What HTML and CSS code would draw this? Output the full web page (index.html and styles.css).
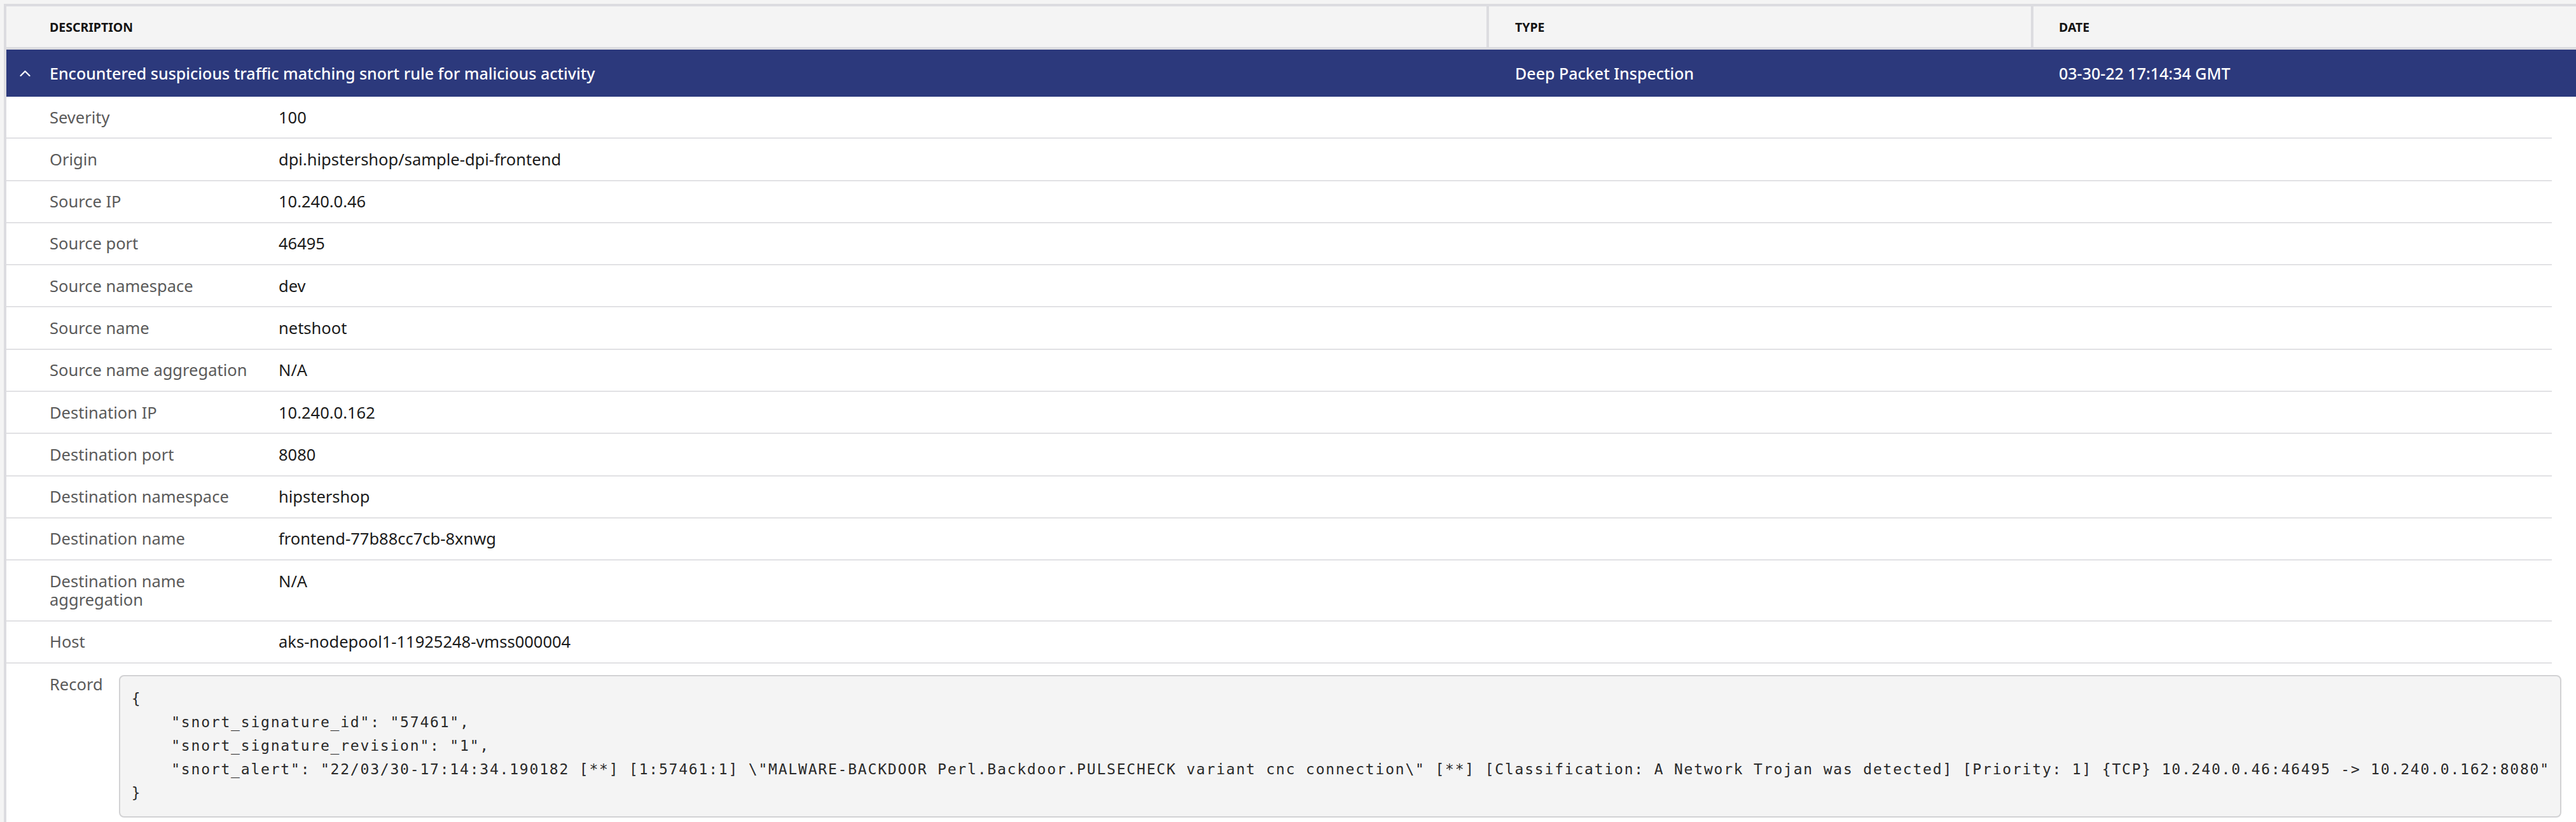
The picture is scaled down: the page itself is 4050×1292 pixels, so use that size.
FILE: index.html
```html
<!DOCTYPE html>
<html lang="en">
<head>
<meta charset="utf-8">
<title>Alerts</title>
<link rel="stylesheet" href="styles.css">
</head>
<body>
<div class="page">
  <div class="table">
    <div class="thead">
      <div class="th th-desc">DESCRIPTION</div>
      <div class="th th-type">TYPE</div>
      <div class="th th-date">DATE</div>
    </div>
    <div class="row-main">
      <div class="cell cell-desc">
        <svg class="chev" width="17" height="10" viewBox="0 0 17 10"><polyline points="1.5,9 8.5,2 15.5,9" fill="none" stroke="#fff" stroke-width="2.2" stroke-linecap="round" stroke-linejoin="round"/></svg>
        <span class="title">Encountered suspicious traffic matching snort rule for malicious activity</span>
      </div>
      <div class="cell cell-type">Deep Packet Inspection</div>
      <div class="cell cell-date">03-30-22 17:14:34 GMT</div>
    </div>
    <div class="details">
      <div class="drow"><div class="dlabel">Severity</div><div class="dvalue">100</div></div>
      <div class="drow"><div class="dlabel">Origin</div><div class="dvalue">dpi.hipstershop/sample-dpi-frontend</div></div>
      <div class="drow"><div class="dlabel">Source IP</div><div class="dvalue">10.240.0.46</div></div>
      <div class="drow"><div class="dlabel">Source port</div><div class="dvalue">46495</div></div>
      <div class="drow"><div class="dlabel">Source namespace</div><div class="dvalue">dev</div></div>
      <div class="drow"><div class="dlabel">Source name</div><div class="dvalue">netshoot</div></div>
      <div class="drow"><div class="dlabel">Source name aggregation</div><div class="dvalue">N/A</div></div>
      <div class="drow"><div class="dlabel">Destination IP</div><div class="dvalue">10.240.0.162</div></div>
      <div class="drow"><div class="dlabel">Destination port</div><div class="dvalue">8080</div></div>
      <div class="drow"><div class="dlabel">Destination namespace</div><div class="dvalue">hipstershop</div></div>
      <div class="drow"><div class="dlabel">Destination name</div><div class="dvalue">frontend-77b88cc7cb-8xnwg</div></div>
      <div class="drow"><div class="dlabel">Destination name aggregation</div><div class="dvalue">N/A</div></div>
      <div class="drow"><div class="dlabel">Host</div><div class="dvalue">aks-nodepool1-11925248-vmss000004</div></div>
      <div class="drow drow-record"><div class="dlabel-record">Record</div><pre class="code">{
    "snort_signature_id": "57461",
    "snort_signature_revision": "1",
    "snort_alert": "22/03/30-17:14:34.190182 [**] [1:57461:1] \"MALWARE-BACKDOOR Perl.Backdoor.PULSECHECK variant cnc connection\" [**] [Classification: A Network Trojan was detected] [Priority: 1] {TCP} 10.240.0.46:46495 -&gt; 10.240.0.162:8080"
}</pre></div>
    </div>
  </div>
</div>
</body>
</html>
```
FILE: styles.css
```css
* { box-sizing: border-box; }
html, body { margin: 0; padding: 0; }
body {
  background: #f4f4f4;
  font-family: "Noto Sans", "Open Sans", "DejaVu Sans", sans-serif;
  color: #1b1b1b;
}
.page { padding: 6px 0 0 6px; }
.table {
  border-top: 4px solid #dcdce0;
  border-left: 4px solid #dcdce0;
  background: #ffffff;
}
.thead {
  display: grid;
  grid-template-columns: 2331px 856px 1fr;
  height: 68px;
  background: #f4f4f4;
  border-bottom: 4px solid #dcdce0;
}
.th {
  display: flex;
  align-items: center;
  padding-left: 41px;
  font-size: 19.5px;
  font-weight: 700;
  color: #151515;
  border-right: 4px solid #dcdce0;
}
.th-desc { padding-left: 68px; }
.th-date { border-right: none; padding-left: 40px; }
.row-main {
  display: grid;
  grid-template-columns: 2331px 856px 1fr;
  height: 74px;
  background: #2c397c;
  color: #ffffff;
  font-size: 25px;
  font-weight: 500;
}
.cell { display: flex; align-items: center; padding-left: 41px; }
.cell-date { padding-left: 40px; }
.cell-desc { padding-left: 21px; gap: 30px; }
.chev { display: block; flex: none; }
.details {
  background: #ffffff;
  padding-right: 38px;
}
.drow {
  display: flex;
  padding: 17.5px 0 17.5px 68px;
  border-bottom: 2px solid #e1e1e4;
  font-size: 25.5px;
  line-height: 29.3px;
}
.dlabel {
  flex: 0 0 360px;
  padding-right: 20px;
  color: #5a5a5a;
}
.dvalue { color: #1b1b1b; }
.drow-record { border-bottom: none; gap: 25px; }
.dlabel-record { color: #5a5a5a; flex: none; }
.code {
  margin: 0;
  flex: none;
  padding: 17.5px 16px 17.5px 18px;
  background: #f4f4f4;
  border: 2px solid #d2d2d4;
  border-radius: 8px;
  font-family: "DejaVu Sans Mono", "Liberation Mono", monospace;
  font-size: 23px;
  letter-spacing: 1.8px;
  line-height: 37px;
  color: #2a2a2a;
}
```
